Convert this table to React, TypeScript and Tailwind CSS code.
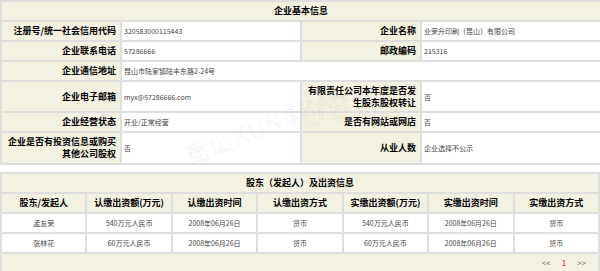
import * as React from "react";

const FONT = "font-['Noto_Sans_CJK_SC','Noto_Sans',sans-serif]";

type Row = {
  h: string;
  cells: { label: string; value: string; colSpan?: number }[];
};

const BASIC: Row[] = [
  {
    h: "h-[20px]",
    cells: [
      { label: "注册号/统一社会信用代码", value: "320583000115443" },
      { label: "企业名称", value: "业荣升印刷（昆山）有限公司" },
    ],
  },
  {
    h: "h-[20px]",
    cells: [
      { label: "企业联系电话", value: "57286666" },
      { label: "邮政编码", value: "215316" },
    ],
  },
  {
    h: "h-[20px]",
    cells: [{ label: "企业通信地址", value: "昆山市陆家镇陆丰东路2-24号", colSpan: 3 }],
  },
  {
    h: "h-[31px]",
    cells: [
      { label: "企业电子邮箱", value: "myx@57286666.com" },
      { label: "有限责任公司本年度是否发生股东股权转让", value: "否" },
    ],
  },
  {
    h: "h-[20px]",
    cells: [
      { label: "企业经营状态", value: "开业/正常经营" },
      { label: "是否有网站或网店", value: "否" },
    ],
  },
  {
    h: "h-[32px]",
    cells: [
      { label: "企业是否有投资信息或购买其他公司股权", value: "否" },
      { label: "从业人数", value: "企业选择不公示" },
    ],
  },
];

const HOLDER_COLS = [
  "股东/发起人",
  "认缴出资额(万元)",
  "认缴出资时间",
  "认缴出资方式",
  "实缴出资额(万元)",
  "实缴出资时间",
  "实缴出资方式",
];

const HOLDERS = [
  ["孟友荣", "540万元人民币", "2008年06月26日", "货币", "540万元人民币", "2008年06月26日", "货币"],
  ["张林花", "60万元人民币", "2008年06月26日", "货币", "60万元人民币", "2008年06月26日", "货币"],
];

const cellBorder = "border-2 border-[#dedede]";

function Label({ text }: { text: string }) {
  return (
    <td
      className={`${cellBorder} bg-[#f2f1e2] px-[4px] text-right align-middle text-[9px] font-bold leading-[12px] text-black`}
    >
      {text}
    </td>
  );
}

function Value({ text, colSpan }: { text: string; colSpan?: number }) {
  return (
    <td
      colSpan={colSpan}
      className={`${cellBorder} bg-white px-[2px] align-middle text-[7px] leading-[10px] text-[#444]`}
    >
      {text}
    </td>
  );
}

export default function App() {
  return (
    <div className={`relative h-[271px] w-[600px] overflow-hidden bg-white ${FONT}`}>
      <table className="w-[600px] table-fixed border-collapse">
        <colgroup>
          <col className="w-[120px]" />
          <col className="w-[180px]" />
          <col className="w-[120px]" />
          <col className="w-[180px]" />
        </colgroup>
        <tbody>
          <tr className="h-[20px]">
            <td
              colSpan={4}
              className={`${cellBorder} bg-[#f2f1e2] text-center text-[9px] font-bold text-black`}
            >
              企业基本信息
            </td>
          </tr>
          {BASIC.map((row, i) => (
            <tr key={i} className={row.h}>
              {row.cells.map((c) => (
                <React.Fragment key={c.label}>
                  <Label text={c.label} />
                  <Value text={c.value} colSpan={c.colSpan} />
                </React.Fragment>
              ))}
            </tr>
          ))}
        </tbody>
      </table>

      <table className="mt-[7px] w-[600px] table-fixed border-collapse">
        <tbody>
          <tr className="h-[20px]">
            <td
              colSpan={7}
              className={`${cellBorder} bg-[#f2f1e2] text-center text-[9px] font-bold text-black`}
            >
              股东（发起人）及出资信息
            </td>
          </tr>
          <tr className="h-[20px]">
            {HOLDER_COLS.map((c) => (
              <td
                key={c}
                className={`${cellBorder} bg-[#f2f1e2] text-center text-[9px] font-bold text-black`}
              >
                {c}
              </td>
            ))}
          </tr>
          {HOLDERS.map((r, i) => (
            <tr key={i} className="h-[20px]">
              {r.map((v, j) => (
                <td
                  key={j}
                  className={`${cellBorder} bg-white text-center text-[7px] text-[#444]`}
                >
                  {v}
                </td>
              ))}
            </tr>
          ))}
          <tr className="h-[20px]">
            <td colSpan={7} className={`${cellBorder} bg-[#f2f1e2] pr-[12px]`}>
              <div className="flex items-center justify-end gap-[11px] text-[8px] text-[#666]">
                <span>&lt;&lt;</span>
                <span className="text-[#e02020]">1</span>
                <span>&gt;&gt;</span>
              </div>
            </td>
          </tr>
        </tbody>
      </table>

      {/* watermark */}
      <svg
        className="pointer-events-none absolute left-[170px] top-[70px]"
        width="260"
        height="110"
        viewBox="0 0 260 110"
      >
        <g fill="none" stroke="#000" strokeOpacity="0.07" strokeWidth="0.8">
          <text x="20" y="95" fontSize="22" letterSpacing="3" transform="rotate(-22 20 95)">
            昆山KUNSHAN
          </text>
          <text x="120" y="60" fontSize="34" letterSpacing="4" transform="rotate(-10 120 60)">
            IDBDS
          </text>
        </g>
      </svg>
    </div>
  );
}
